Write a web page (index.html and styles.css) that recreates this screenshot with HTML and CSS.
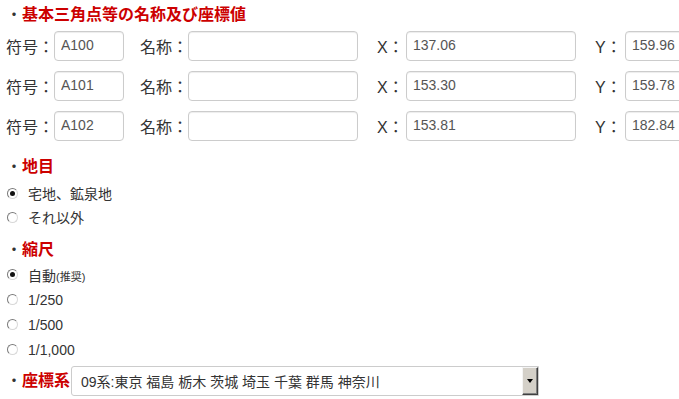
FILE: index.html
```html
<!DOCTYPE html>
<html lang="ja">
<head>
    <meta charset="UTF-8">
    <title>基本三角点等の名称及び座標値</title>
    <link rel="stylesheet" href="styles.css">
</head>
<body>
    <!-- 基本三角点 -->
    <div class="heading heading-top"><span class="dot">・</span>基本三角点等の名称及び座標値</div>

    <div class="points">
        <div class="point-row">
            <span class="label">符号：</span><input class="field field-code" type="text" value="A100">
            <span class="label label-name">名称：</span><input class="field field-wide" type="text" value="">
            <span class="label label-x">X：</span><input class="field field-wide" type="text" value="137.06">
            <span class="label label-y">Y：</span><input class="field field-wide" type="text" value="159.96">
        </div>
        <div class="point-row">
            <span class="label">符号：</span><input class="field field-code" type="text" value="A101">
            <span class="label label-name">名称：</span><input class="field field-wide" type="text" value="">
            <span class="label label-x">X：</span><input class="field field-wide" type="text" value="153.30">
            <span class="label label-y">Y：</span><input class="field field-wide" type="text" value="159.78">
        </div>
        <div class="point-row">
            <span class="label">符号：</span><input class="field field-code" type="text" value="A102">
            <span class="label label-name">名称：</span><input class="field field-wide" type="text" value="">
            <span class="label label-x">X：</span><input class="field field-wide" type="text" value="153.81">
            <span class="label label-y">Y：</span><input class="field field-wide" type="text" value="182.84">
        </div>
    </div>

    <!-- 地目 -->
    <div class="heading heading-land"><span class="dot">・</span>地目</div>
    <div class="options options-land">
        <label class="option"><input type="radio" name="land" checked>宅地、鉱泉地</label>
        <label class="option"><input type="radio" name="land">それ以外</label>
    </div>

    <!-- 縮尺 -->
    <div class="heading heading-scale"><span class="dot">・</span>縮尺</div>
    <div class="options options-scale">
        <label class="option"><input type="radio" name="scale" checked>自動<small>(推奨)</small></label>
        <label class="option"><input type="radio" name="scale">1/250</label>
        <label class="option"><input type="radio" name="scale">1/500</label>
        <label class="option"><input type="radio" name="scale">1/1,000</label>
    </div>

    <!-- 座標系 -->
    <div class="system-row">
        <div class="heading heading-system"><span class="dot">・</span>座標系</div>
        <div class="select">
            <span class="select-text">09系:東京 福島 栃木 茨城 埼玉 千葉 群馬 神奈川</span>
            <span class="select-btn"><span class="arrow"></span></span>
        </div>
    </div>
</body>
</html>
```

FILE: styles.css
```css
/* 基本 */
html, body {
    overflow: hidden;
}

body {
    margin: 0;
    padding: 0 0 0 6px;
    background-color: #fff;
    color: #333;
    font-family: 'Liberation Sans', 'Noto Sans CJK JP', sans-serif;
}

/* 見出し */
.heading {
    font-size: 16px;
    line-height: 20px;
    height: 20px;
    font-weight: bold;
    color: #cc0000;
    white-space: nowrap;
}

.heading .dot {
    color: #333;
    font-weight: normal;
}

.heading-top {
    padding-top: 5px;
}

.heading-land {
    margin-top: 16px;
}

.heading-scale {
    margin-top: 11px;
}

/* 座標値の入力 */
.points {
    margin-top: 6px;
    display: flex;
    flex-direction: column;
    gap: 10px;
}

.point-row {
    display: flex;
    align-items: center;
    height: 30px;
    white-space: nowrap;
}

.label {
    flex-shrink: 0;
    width: 48px;
    font-size: 16px;
    line-height: 20px;
    padding-top: 3px;
    color: #333;
}

.label-name {
    margin-left: 16px;
}

.label-x {
    margin-left: 19px;
    width: 29px;
}

.label-y {
    margin-left: 19px;
    width: 30px;
}

.field {
    flex-shrink: 0;
    box-sizing: border-box;
    height: 30px;
    padding: 0 6px 2px;
    border: 1px solid #ccc;
    border-radius: 4px;
    box-shadow: inset 0 1px 1px rgba(0, 0, 0, 0.075);
    font-family: 'Liberation Sans', sans-serif;
    font-size: 14px;
    color: #555;
    background: #fff;
}

.field-code {
    width: 70px;
}

.field-wide {
    width: 170px;
}

/* ラジオボタン */
.options {
    display: flex;
    flex-direction: column;
}

.options-land {
    margin-top: 4px;
}

.options-land .option {
    height: 24px;
}

.options-scale {
    margin-top: 2px;
}

.options-scale .option {
    height: 25px;
}

.option {
    display: flex;
    align-items: center;
    font-size: 14px;
    color: #333;
    white-space: nowrap;
}

.option small {
    font-size: 11px;
    padding-top: 2px;
}

.option input {
    appearance: none;
    -webkit-appearance: none;
    box-sizing: border-box;
    width: 11px;
    height: 11px;
    margin: 0 10px 0 1px;
    border-radius: 50%;
    border: 1px solid;
    border-color: #7a7a7a #d8d8d8 #d8d8d8 #7a7a7a;
    background: #fff;
    position: relative;
}

.option input:checked::after {
    content: '';
    position: absolute;
    left: 2px;
    top: 2px;
    width: 5px;
    height: 5px;
    border-radius: 50%;
    background: #111;
}

/* 座標系 */
.system-row {
    margin-top: 4px;
    display: flex;
    align-items: center;
    height: 30px;
}

.heading-system {
    width: 65px;
}

.select {
    box-sizing: border-box;
    width: 468px;
    height: 30px;
    display: flex;
    align-items: center;
    border: 1px solid #ccc;
    border-radius: 3px 0 0 3px;
    background: #fff;
}

.select-text {
    flex: 1;
    padding-left: 9px;
    font-size: 14px;
    color: #333;
    white-space: nowrap;
    overflow: hidden;
}

.select-btn {
    box-sizing: border-box;
    width: 16px;
    height: 28px;
    display: flex;
    align-items: center;
    justify-content: center;
    background: #d4d0c8;
    border: 1px solid;
    border-color: #f4f4f4 #404040 #404040 #f4f4f4;
    box-shadow: inset -1px -1px 0 #808080;
}

.arrow {
    width: 0;
    height: 0;
    border-left: 3.5px solid transparent;
    border-right: 3.5px solid transparent;
    border-top: 4px solid #000;
}
```
